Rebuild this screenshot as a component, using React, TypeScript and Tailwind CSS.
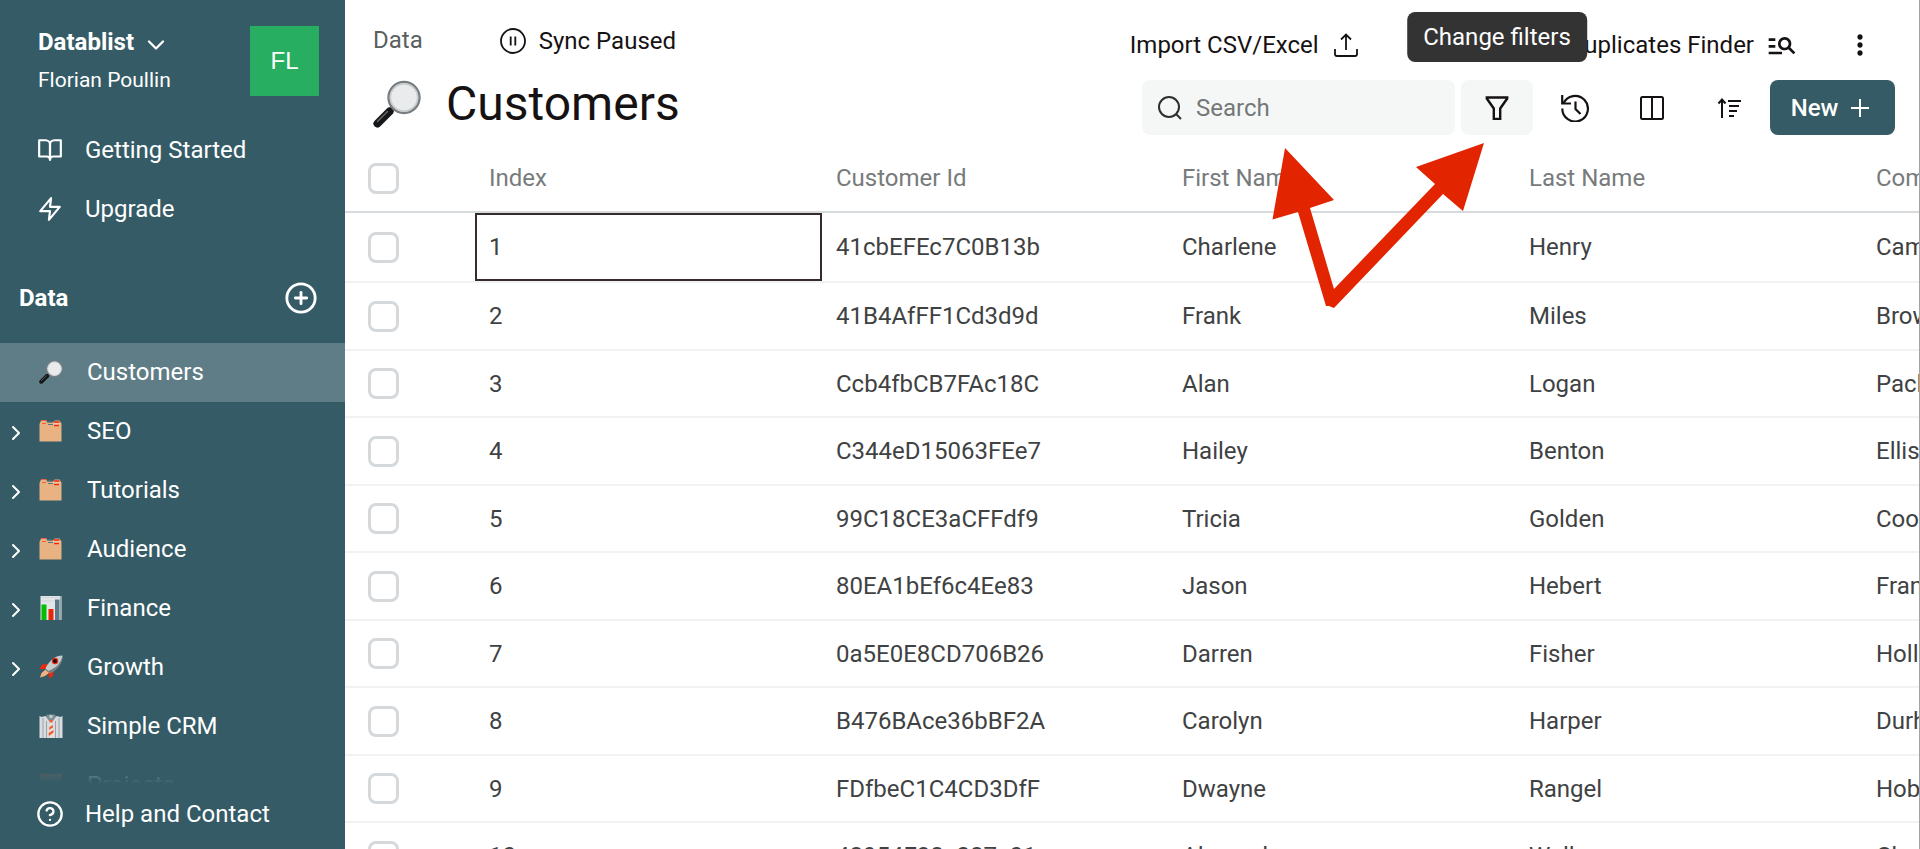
import { ReactNode } from "react";
import { FiBookOpen, FiChevronDown, FiChevronRight, FiHelpCircle, FiPlusCircle, FiZap } from "react-icons/fi";
import { MdManageSearch, MdMoreVert } from "react-icons/md";

type Customer = {
    index: number;
    customerId: string;
    firstName: string;
    lastName: string;
    company: string;
}

type Collection = {
    name: string;
    icon: ReactNode;
    expandable?: boolean;
    active?: boolean;
}

const MagnifierEmoji = ({ className }: { className: string }) => (
    <svg viewBox="0 0 48 48" className={className} aria-hidden="true">
        <path d="M16 28l4 4" stroke="#8b9093" strokeWidth="4" />
        <path d="M4.500 43.500L16.500 31.500" stroke="#151719" strokeWidth="8" strokeLinecap="round" />
        <path d="M4.500 41.500L14.500 31.500" stroke="#62686b" strokeWidth="1.500" strokeLinecap="round" />
        <circle cx="31" cy="17.500" r="15.500" fill="#e9ebec" stroke="#777d80" strokeWidth="2.400" />
        <circle cx="31" cy="17.500" r="13.600" fill="none" stroke="#c9cdcf" strokeWidth="1.600" />
    </svg>
)

const FolderEmoji = () => (
    <svg viewBox="0 0 24 24" className="size-6" aria-hidden="true">
        <path d="M0.500 5L2 1.500h5l1.500 2H14l1.500-2h5L22.500 4.500V22.500H0.500z" fill="#e8b283" />
        <path d="M2.500 1.500h5M3 4.500h4" stroke="#f0603f" strokeWidth="1" />
        <path d="M8 3h5M9 5.500h5" stroke="#54788a" strokeWidth="1.200" />
        <path d="M15 3h5.500M15 6.500h5" stroke="#f02a10" strokeWidth="1.500" />
        <path d="M14 4.800h7" stroke="#e9d3b9" strokeWidth="1" />
    </svg>
)

const ChartEmoji = () => (
    <svg viewBox="0 0 23 24" className="size-6" aria-hidden="true">
        <path d="M1 0h21v24H1z" fill="#e3e6e8" />
        <path d="M2 1.500h19M2 5h19" stroke="#cdd2d5" strokeWidth="0.800" />
        <path d="M2 8.500h5V24H2z" fill="#05bd05" />
        <path d="M9 13h5v11H9z" fill="#ea2509" />
        <path d="M15.500 3.500h4.500V24h-4.500z" fill="#5a7a89" />
        <path d="M20.500 0h1.500v24h-1.500z" fill="#9aa5ab" />
    </svg>
)

const RocketEmoji = () => (
    <svg viewBox="0 0 24 24" className="size-6" aria-hidden="true">
        <path d="M9 9L3 9.500 0.500 14 7 14zM14.500 16l-0.500 5-4 2.500-0.500-7z" fill="#ea2a0c" />
        <path d="M6.500 14.500L10 18l-4 3-5 1.500 1.500-4.500z" fill="#f4b183" />
        <path d="M23.500 0.500C17 0.500 10 5 6.500 13.500L11 18C19 14 23.500 8 23.500 0.500z" fill="#c6cbce" />
        <path d="M23.500 0.500C22 8 17 13.500 9 16l2 2C19 14 23.500 8 23.500 0.500z" fill="#737a80" />
        <circle cx="16" cy="6" r="3.200" fill="#e5280d" />
        <circle cx="16" cy="6" r="2" fill="#1a1215" />
    </svg>
)

const NecktieEmoji = () => (
    <svg viewBox="0 0 24 24" className="size-6" aria-hidden="true">
        <path d="M8 0.500h8l2 5-6 4-6-4z" fill="#7f8f96" />
        <path d="M0.500 2l2 1 4-1 5.500 8 5.500-8 4 1 2-1V24H0.500z" fill="#d9dcdf" />
        <path d="M4 4v20M7.500 7v17M16.500 7v17M20 4v20" stroke="#99a3a9" strokeWidth="1" />
        <path d="M10 6h4l-1 3 2 11-3 4-3-4 2-11z" fill="#e9e0da" />
        <path d="M10 6h4l-1 2.500h-2zM10.500 13l3.500-2v2.500L10 16zM9.500 19l5-3v2.500L10 22z" fill="#ef5a33" />
        <circle cx="12" cy="2.500" r="1.800" fill="#c3cace" />
    </svg>
)

const ProjectEmoji = () => (
    <svg viewBox="0 0 24 24" className="size-6" aria-hidden="true">
        <path d="M1 1h22v22H1z" fill="#8b8180" />
        <path d="M1 2.500h22" stroke="#b0604a" strokeWidth="4" strokeDasharray="3 2" />
        <path d="M1 7h22M1 10h22" stroke="#5a6468" strokeWidth="1.200" />
    </svg>
)

const UploadIcon = () => (
    <svg viewBox="0 0 24 24" className="size-6" fill="none" stroke="#161213" strokeWidth="1.800" aria-hidden="true">
        <path d="M12 17V2M7 6.500L12 1.500l5 5" />
        <path d="M1 16v5a2 2 0 0 0 2 2h18a2 2 0 0 0 2-2v-5" />
    </svg>
)

const PauseIcon = () => (
    <svg viewBox="0 0 26 26" className="size-[26px]" fill="none" stroke="#161213" strokeWidth="1.800" aria-hidden="true">
        <circle cx="13" cy="13" r="12" />
        <path d="M10.700 8.500v9M15.300 8.500v9" />
    </svg>
)

const SearchIcon = () => (
    <svg viewBox="0 0 24 24" className="size-6 shrink-0" fill="none" stroke="#2c2e2f" strokeWidth="2" aria-hidden="true">
        <circle cx="11" cy="11" r="10" />
        <path d="M18 18l5 5" />
    </svg>
)

const FilterIcon = () => (
    <svg viewBox="0 0 24 24" className="size-6" fill="none" stroke="#161213" strokeWidth="2.400" aria-hidden="true">
        <path d="M1.800 1.500h20.400v1L15.200 12.500v10.500H8.800V12.500L1.800 2.500z" />
    </svg>
)

const HistoryIcon = () => (
    <svg viewBox="0 0 28 28" className="size-7" fill="none" stroke="#161213" strokeWidth="2.200" aria-hidden="true">
        <path d="M1.200 1V9.500H10" />
        <path d="M2.400 9.500A12.800 12.800 0 1 1 1.300 14.500" />
        <path d="M14.500 7.500v7.500l5 5" />
    </svg>
)

const ColumnsIcon = () => (
    <svg viewBox="0 0 24 24" className="size-6" fill="none" stroke="#161213" strokeWidth="2" aria-hidden="true">
        <rect x="1" y="1" width="22" height="22" rx="1.500" />
        <path d="M12 1v22" />
    </svg>
)

const SortIcon = () => (
    <svg viewBox="0 0 24 24" className="size-6" fill="none" stroke="#161213" strokeWidth="2" aria-hidden="true">
        <path d="M5 22V4M1.500 7.500l3.500-4 3.500 4" />
        <path d="M11 5h13M12 10h10M12 15h8M12 20h5" />
    </svg>
)

const PlusIcon = () => (
    <svg viewBox="0 0 20 20" className="size-5" fill="none" stroke="#ffffff" strokeWidth="2" aria-hidden="true">
        <path d="M10 1v18M1 10h18" />
    </svg>
)

const columns = [
    { header: "Index", className: "w-[347px]" },
    { header: "Customer Id", className: "w-[346px]" },
    { header: "First Name", className: "w-[347px]" },
    { header: "Last Name", className: "w-[347px]" },
    { header: "Company", className: "" },
]

const collections: Collection[] = [
    { name: "Customers", icon: <MagnifierEmoji className="size-6" />, active: true },
    { name: "SEO", icon: <FolderEmoji />, expandable: true },
    { name: "Tutorials", icon: <FolderEmoji />, expandable: true },
    { name: "Audience", icon: <FolderEmoji />, expandable: true },
    { name: "Finance", icon: <ChartEmoji />, expandable: true },
    { name: "Growth", icon: <RocketEmoji />, expandable: true },
    { name: "Simple CRM", icon: <NecktieEmoji /> },
    { name: "Projects", icon: <ProjectEmoji /> },
]

const customers: Customer[] = [
    { index: 1, customerId: "41cbEFEc7C0B13b", firstName: "Charlene", lastName: "Henry", company: "Campos" },
    { index: 2, customerId: "41B4AfFF1Cd3d9d", firstName: "Frank", lastName: "Miles", company: "Brown" },
    { index: 3, customerId: "Ccb4fbCB7FAc18C", firstName: "Alan", lastName: "Logan", company: "Pacheco" },
    { index: 4, customerId: "C344eD15063FEe7", firstName: "Hailey", lastName: "Benton", company: "Ellis" },
    { index: 5, customerId: "99C18CE3aCFFdf9", firstName: "Tricia", lastName: "Golden", company: "Cooke" },
    { index: 6, customerId: "80EA1bEf6c4Ee83", firstName: "Jason", lastName: "Hebert", company: "Franco" },
    { index: 7, customerId: "0a5E0E8CD706B26", firstName: "Darren", lastName: "Fisher", company: "Holloway" },
    { index: 8, customerId: "B476BAce36bBF2A", firstName: "Carolyn", lastName: "Harper", company: "Durham" },
    { index: 9, customerId: "FDfbeC1C4CD3DfF", firstName: "Dwayne", lastName: "Rangel", company: "Hobbs" },
    { index: 10, customerId: "48954F38e287e01", firstName: "Alexandra", lastName: "Walls", company: "Chambers" },
]

const checkboxClass = "block size-[31px] appearance-none rounded-lg border-3 border-[#d5d9dc] bg-white checked:bg-[#345b66]"

const Sidebar = () => (
    <aside className="flex w-[345px] shrink-0 flex-col bg-[#345b66] text-white">
        {/* account */}
        <div className="flex h-[120px] shrink-0 justify-between pt-[26px] pr-[26px] pl-[38px]">
            <div className="flex flex-col gap-1.5">
                <button className="flex h-8 items-center gap-2 text-2xl font-bold">
                    Datablist
                    <FiChevronDown className="mt-1.5 size-7" />
                </button>
                <span className="text-[21px] leading-8">Florian Poullin</span>
            </div>
            <div className="flex h-[70px] w-[69px] items-center justify-center bg-[#27ae60] font-['Liberation_Sans'] text-2xl">FL</div>
        </div>
        <nav>
            <a href="#getting-started" className="flex h-[59px] items-center gap-[22px] pl-[37px]">
                <FiBookOpen className="size-[26px]" />
                Getting Started
            </a>
            <a href="#upgrade" className="flex h-[59px] items-center gap-[22px] pl-[37px]">
                <FiZap className="size-[26px]" />
                Upgrade
            </a>
        </nav>
        {/* collections */}
        <div className="mt-[30px] mb-4 flex h-[59px] items-center justify-between pr-[27px] pl-[19px]">
            <h2 className="font-bold">Data</h2>
            <button aria-label="Add collection">
                <FiPlusCircle className="size-[34px]" />
            </button>
        </div>
        <div className="relative min-h-0 flex-1 overflow-hidden">
            <ul>
                {collections.map((item) => (
                    <li key={item.name} className={item.active ? "bg-[#5f7d86]" : ""}>
                        <a href={"#" + item.name} className="flex h-[59px] items-center pb-0.5">
                            <span className="flex w-[39px] shrink-0 pt-1 pl-1">
                                {item.expandable && <FiChevronRight className="size-6" />}
                            </span>
                            <span className="mr-6">{item.icon}</span>
                            {item.name}
                        </a>
                    </li>
                ))}
            </ul>
            <div className="absolute inset-x-0 bottom-0 h-8 bg-linear-to-b from-[#345b66]/30 to-[#345b66]" />
        </div>
        <a href="#help" className="mb-1.5 flex h-[59px] shrink-0 items-center gap-[21px] pl-9">
            <FiHelpCircle className="size-7" />
            Help and Contact
        </a>
    </aside>
)

const Header = () => (
    <header className="flex h-[145px] shrink-0 justify-between pr-6 pl-7 text-[#161213]">
        <div>
            <div className="flex h-20 items-center gap-[77px]">
                <a href="#data" className="text-[#5c5f60]">Data</a>
                <button className="flex items-center gap-[13px] pt-0.5">
                    <PauseIcon />
                    Sync Paused
                </button>
            </div>
            <div className="flex h-12 items-center gap-[25px]">
                <MagnifierEmoji className="size-12" />
                <h1 className="text-5xl">Customers</h1>
            </div>
        </div>
        <div>
            <div className="flex h-20 items-center justify-end pt-2.5">
                <button className="mr-[211px] flex items-center gap-[15px]">
                    Import CSV/Excel
                    <UploadIcon />
                </button>
                <button className="flex items-center gap-3">
                    Duplicates Finder
                    <MdManageSearch className="size-8" />
                </button>
                <button aria-label="More" className="mr-[19px] ml-[46px]">
                    <MdMoreVert className="size-8" />
                </button>
            </div>
            <div className="flex h-[55px] justify-end gap-[6px]">
                <label className="flex w-[313px] items-center gap-3.5 rounded-lg bg-[#f5f7f7] pl-4">
                    <SearchIcon />
                    <input type="search" aria-label="Search" placeholder="Search" className="w-full min-w-0 bg-transparent outline-none placeholder:text-[#747778]" />
                </label>
                <div className="relative flex">
                    <button aria-label="Change filters" className="flex w-[72px] items-center justify-center rounded-lg bg-[#f5f7f7]">
                        <FilterIcon />
                    </button>
                    <div role="tooltip" className="absolute bottom-full left-1/2 mb-[18px] -translate-x-1/2 rounded-lg bg-[#333333] px-4 py-[9px] whitespace-nowrap text-white">
                        Change filters
                    </div>
                </div>
                <button aria-label="History" className="flex w-[71px] items-center justify-center">
                    <HistoryIcon />
                </button>
                <button aria-label="Columns" className="flex w-[71px] items-center justify-center">
                    <ColumnsIcon />
                </button>
                <button aria-label="Sort" className="flex w-[71px] items-center justify-center">
                    <SortIcon />
                </button>
                <button className="flex w-[125px] items-center justify-center gap-3 rounded-lg bg-[#345b66] pr-1 font-medium text-white">
                    New
                    <PlusIcon />
                </button>
            </div>
        </div>
    </header>
)

const renderRow = (item: Customer) => (
    <tr key={item.index} className="odd:h-[67px] even:h-[68px] first:h-[71px]">
        <td className="border-b-2 border-[#f1f2f2] pl-[23px]">
            <input type="checkbox" aria-label={"Select row " + item.index} className={checkboxClass} />
        </td>
        <td className="border-b-2 border-[#f1f2f2]">
            {item.index === 1 ? (
                <div className="flex h-[68px] items-center border-2 border-[#352b2c] pl-3">{item.index}</div>
            ) : (
                <div className="pl-3.5">{item.index}</div>
            )}
        </td>
        <td className="border-b-2 border-[#f1f2f2] pl-3.5">{item.customerId}</td>
        <td className="border-b-2 border-[#f1f2f2] pl-3.5">{item.firstName}</td>
        <td className="border-b-2 border-[#f1f2f2] pl-3.5">{item.lastName}</td>
        <td className="border-b-2 border-[#f1f2f2] pl-3.5">{item.company}</td>
    </tr>
)

const CustomersTable = () => (
    <table className="w-full table-fixed border-separate border-spacing-0 text-left whitespace-nowrap text-[#3f4243]">
        <thead>
            <tr className="h-[68px] text-[#777b7c]">
                <th className="w-[130px] border-b-2 border-[#d8dbdd] pl-[23px]">
                    <input type="checkbox" aria-label="Select all" className={checkboxClass} />
                </th>
                {columns.map((column) => (
                    <th key={column.header} className={"border-b-2 border-[#d8dbdd] pl-3.5 font-normal " + column.className}>
                        {column.header}
                    </th>
                ))}
            </tr>
        </thead>
        <tbody>{customers.map((item) => renderRow(item))}</tbody>
    </table>
)

// callout pointing at the search box and the filter button
const Arrows = () => (
    <svg viewBox="0 0 212 165" className="pointer-events-none absolute top-[143px] right-[435px] h-[165px] w-[212px]" fill="#e32400" aria-hidden="true">
        <path d="M13 5L62 57L38 65L62 146L163 41L144 24L212 0L191 68L171 51L62 165L57 163L54 163L26 69L0.500 76.500z" />
    </svg>
)

const App = () => {
    return (
        <div className="flex h-screen overflow-hidden bg-white font-[Roboto,sans-serif] text-2xl">
            <Sidebar />
            <main className="relative flex min-w-0 flex-1 flex-col overflow-hidden border-r border-[#a3a3a3]">
                <Header />
                <CustomersTable />
                <Arrows />
            </main>
        </div>
    );
}

export default App;
